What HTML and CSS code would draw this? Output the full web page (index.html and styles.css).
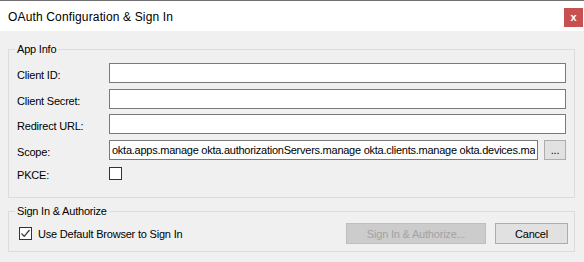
FILE: index.html
```html
<!DOCTYPE html>
<html lang="en">
<head>
    <meta charset="UTF-8">
    <title>OAuth Configuration &amp; Sign In</title>
    <link rel="stylesheet" href="styles.css">
</head>
<body>
    <div class="window">
        <div class="titlebar">
            <span class="title">OAuth Configuration &amp; Sign In</span>
            <span class="close">x</span>
        </div>
        <div class="content">
            <fieldset class="group">
                <legend>App Info</legend>
                <div class="fields">
                    <label>Client ID:</label>
                    <input type="text" class="text-input">
                    <label>Client Secret:</label>
                    <input type="text" class="text-input">
                    <label>Redirect URL:</label>
                    <input type="text" class="text-input">
                    <label>Scope:</label>
                    <div class="scope-row">
                        <input type="text" class="text-input scope" value="okta.apps.manage okta.authorizationServers.manage okta.clients.manage okta.devices.manage okta.events.read okta.groups.manage">
                        <button class="btn small">...</button>
                    </div>
                    <label class="pkce">PKCE:</label>
                    <span class="checkbox"></span>
                </div>
            </fieldset>

            <fieldset class="group signin">
                <legend>Sign In &amp; Authorize</legend>
                <div class="actions">
                    <span class="checkbox checked">
                        <svg width="11" height="11" viewBox="0 0 11 11"><path d="M1.5 5.5 L4.2 8.3 L9.5 2" fill="none" stroke="#333" stroke-width="1.2"/></svg>
                    </span>
                    <span class="check-label">Use Default Browser to Sign In</span>
                    <button class="btn disabled" disabled>Sign In &amp; Authorize...</button>
                    <button class="btn cancel">Cancel</button>
                </div>
            </fieldset>
        </div>
    </div>
</body>
</html>
```

FILE: styles.css
```css
body {
    margin: 0;
    background-color: #f0f0f0;
    font-family: "Liberation Sans", Arial, sans-serif;
    font-size: 11px;
    letter-spacing: -0.2px;
    color: #000;
}
.window {
    width: 584px;
    height: 262px;
    border-top: 1px solid #6f6f6f;
    box-sizing: border-box;
    overflow: hidden;
}
.titlebar {
    height: 30px;
    background-color: white;
    display: flex;
    justify-content: space-between;
    align-items: flex-start;
}
.title {
    font-size: 12px;
    letter-spacing: 0.15px;
    line-height: 16px;
    margin: 8px 0 0 8px;
}
.close {
    width: 19px;
    height: 19px;
    margin: 7px 1px 0 0;
    background-color: #c75050;
    color: white;
    font-weight: bold;
    font-size: 11px;
    line-height: 18px;
    text-align: center;
    letter-spacing: 0;
}
.content {
    padding: 11px 9px 0 8px;
}
.group {
    margin: 0;
    padding: 0;
    border: 1px solid #dcdcdc;
}
.group legend {
    margin-left: 6px;
    padding: 0 2px;
    line-height: 14px;
}
.fields {
    display: grid;
    grid-template-columns: 92px 457px;
    grid-template-rows: 26px 25px 26px 27px 13px;
    padding: 7px 0 17px 8px;
}
.fields label {
    line-height: 14px;
    padding-top: 5px;
}
.fields label.pkce {
    padding-top: 1px;
}
.text-input {
    width: 100%;
    height: 20px;
    margin: 0;
    padding: 0 2px;
    border: 1px solid #7a7a7a;
    background-color: white;
    box-sizing: border-box;
    font-family: inherit;
    font-size: 11px;
    letter-spacing: -0.25px;
    outline: none;
}
.scope-row {
    display: flex;
    gap: 6px;
}
.scope {
    width: 430px;
}
.btn {
    height: 21px;
    margin: 0;
    padding: 0;
    border: 1px solid #adadad;
    background-color: #e1e1e1;
    font-family: inherit;
    font-size: 11px;
    letter-spacing: -0.2px;
    color: #000;
    box-sizing: border-box;
}
.btn.small {
    width: 22px;
    height: 20px;
    line-height: 14px;
}
.checkbox {
    width: 13px;
    height: 13px;
    border: 1px solid #333;
    background-color: white;
    box-sizing: border-box;
    display: flex;
    align-items: center;
    justify-content: center;
}
.group.signin {
    margin-top: 6px;
}
.actions {
    display: flex;
    align-items: center;
    padding: 5px 6px 7px 10px;
}
.check-label {
    margin-left: 6px;
    flex: 1;
}
.btn.disabled {
    width: 140px;
    background-color: #cccccc;
    border-color: #bfbfbf;
    color: #a3a3a3;
}
.btn.cancel {
    width: 73px;
    margin-left: 9px;
}
```
